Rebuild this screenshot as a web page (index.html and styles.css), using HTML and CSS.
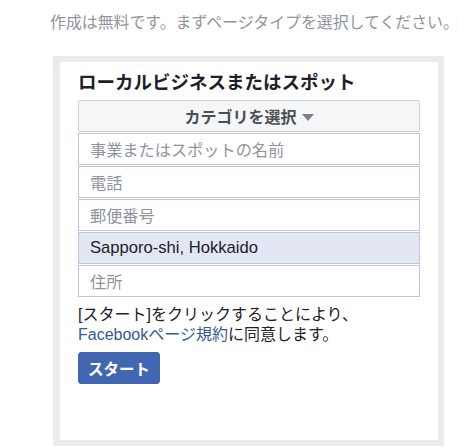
FILE: index.html
```html
<!DOCTYPE html>
<html lang="ja">
<head>
<meta charset="utf-8">
<link rel="stylesheet" href="styles.css">
</head>
<body>
<div class="page">
  <h1 class="page-title">ページを作成</h1>
  <p class="subtitle">作成は無料です。まずページタイプを選択してください。</p>
  <div class="card-frame">
    <div class="card">
      <h2 class="card-title">ローカルビジネスまたはスポット</h2>
      <div class="category">カテゴリを選択 <span class="caret"></span></div>
      <div class="field placeholder">事業またはスポットの名前</div>
      <div class="field placeholder">電話</div>
      <div class="field placeholder">郵便番号</div>
      <div class="field filled">Sapporo-shi, Hokkaido</div>
      <div class="field placeholder">住所</div>
      <p class="terms">[スタート]をクリックすることにより、<br><a class="link" href="#">Facebookページ規約</a>に同意します。</p>
      <button class="start">スタート</button>
    </div>
  </div>
</div>
</body>
</html>
```
FILE: styles.css
```css
html, body {
  margin: 0;
  padding: 0;
  background: #fff;
  overflow: hidden;
}
body {
  font-family: "Liberation Sans", "Noto Sans CJK JP", sans-serif;
  color: #1d2129;
}
.page {
  padding-left: 50px;
}
.page-title {
  margin: -19px 0 0 4px;
  font-size: 20px;
  line-height: 20px;
  font-weight: bold;
  color: #90949c;
}
.subtitle {
  margin: 12px 0 0 0;
  font-size: 15.9px;
  line-height: 20px;
  color: #90949c;
  white-space: nowrap;
}
.card-frame {
  margin: 23px 0 0 3px;
  width: 378px;
  padding: 6px 6px 6px 7px;
  background: #e9ebee;
}
.card {
  background: #fff;
  padding: 10px 18px 56px 18px;
}
.card-title {
  margin: 0 0 6px 0;
  font-size: 18.5px;
  line-height: 22px;
  font-weight: bold;
  color: #1d2129;
  white-space: nowrap;
}
.category {
  height: 32px;
  box-sizing: border-box;
  border: 1px solid #ccd0d5;
  border-radius: 2px;
  background: #f5f6f7;
  color: #4b4f56;
  font-size: 16px;
  font-weight: bold;
  display: flex;
  align-items: center;
  justify-content: center;
  gap: 5px;
}
.caret {
  width: 0;
  height: 0;
  border-left: 6px solid transparent;
  border-right: 6px solid transparent;
  border-top: 7px solid #7f8389;
  margin-top: 2px;
}
.field {
  height: 32px;
  box-sizing: border-box;
  margin-top: 1px;
  border: 1px solid #bdc7d8;
  padding: 0 11px;
  display: flex;
  align-items: center;
  font-size: 16.2px;
}
.placeholder {
  color: #90949c;
  background: #fff;
}
.filled {
  color: #1d2129;
  background: #e2e7f3;
  font-size: 16.6px;
}
.terms {
  margin: 8px 0 0 0;
  font-size: 16px;
  line-height: 20px;
  color: #1d2129;
  white-space: nowrap;
}
.link {
  color: #365899;
  text-decoration: none;
}
.start {
  margin-top: 7px;
  display: block;
  width: 82px;
  height: 32px;
  border: 1px solid #4267b2;
  border-radius: 3px;
  background: #4267b2;
  color: #fff;
  font-family: "Liberation Sans", "Noto Sans CJK JP", sans-serif;
  font-size: 15.5px;
  font-weight: bold;
  padding: 0;
}
```
